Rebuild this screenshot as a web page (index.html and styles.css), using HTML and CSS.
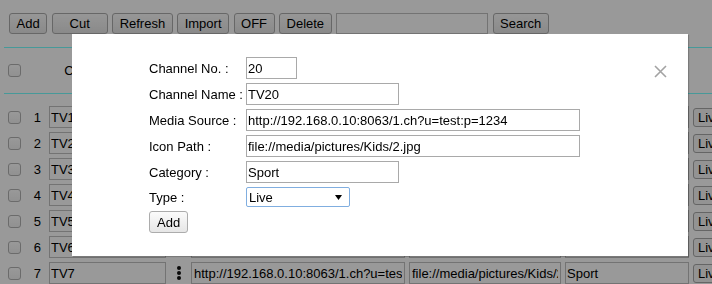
FILE: index.html
```html
<!DOCTYPE html>
<html lang="en">
<head>
  <meta charset="UTF-8">
  <title>Channel List</title>
  <link rel="stylesheet" href="styles.css">
</head>
<body>
  <div class="toolbar">
    <button>Add</button>
    <button class="btn-cut">Cut</button>
    <button>Refresh</button>
    <button>Import</button>
    <button>OFF</button>
    <button>Delete</button>
    <input type="text" class="search-box">
    <button>Search</button>
  </div>

  <div class="channel-table">
    <div class="channel-row table-head">
      <input type="checkbox" class="check">
      <span></span>
      <span class="head-cell">Channel Name</span>
      <span></span>
      <span class="head-cell">Media Source</span>
      <span class="head-cell">Icon Path</span>
      <span class="head-cell">Category</span>
      <span class="head-cell">Type</span>
    </div>

    <div class="table-body">
      <div class="channel-row">
        <input type="checkbox" class="check">
        <span class="num">1</span>
        <input type="text" class="cell" value="TV1">
        <span class="more"><svg width="4" height="14" viewBox="0 0 4 14"><circle cx="2" cy="2" r="2"/><circle cx="2" cy="7" r="2"/><circle cx="2" cy="12" r="2"/></svg></span>
        <input type="text" class="cell" value="http://192.168.0.10:8063/1.ch?u=test:p=1234">
        <input type="text" class="cell" value="file://media/pictures/Kids/2.jpg">
        <input type="text" class="cell" value="Sport">
        <select class="type-select"><option>Live</option></select>
      </div>
      <div class="channel-row">
        <input type="checkbox" class="check">
        <span class="num">2</span>
        <input type="text" class="cell" value="TV2">
        <span class="more"><svg width="4" height="14" viewBox="0 0 4 14"><circle cx="2" cy="2" r="2"/><circle cx="2" cy="7" r="2"/><circle cx="2" cy="12" r="2"/></svg></span>
        <input type="text" class="cell" value="http://192.168.0.10:8063/1.ch?u=test:p=1234">
        <input type="text" class="cell" value="file://media/pictures/Kids/2.jpg">
        <input type="text" class="cell" value="Sport">
        <select class="type-select"><option>Live</option></select>
      </div>
      <div class="channel-row">
        <input type="checkbox" class="check">
        <span class="num">3</span>
        <input type="text" class="cell" value="TV3">
        <span class="more"><svg width="4" height="14" viewBox="0 0 4 14"><circle cx="2" cy="2" r="2"/><circle cx="2" cy="7" r="2"/><circle cx="2" cy="12" r="2"/></svg></span>
        <input type="text" class="cell" value="http://192.168.0.10:8063/1.ch?u=test:p=1234">
        <input type="text" class="cell" value="file://media/pictures/Kids/2.jpg">
        <input type="text" class="cell" value="Sport">
        <select class="type-select"><option>Live</option></select>
      </div>
      <div class="channel-row">
        <input type="checkbox" class="check">
        <span class="num">4</span>
        <input type="text" class="cell" value="TV4">
        <span class="more"><svg width="4" height="14" viewBox="0 0 4 14"><circle cx="2" cy="2" r="2"/><circle cx="2" cy="7" r="2"/><circle cx="2" cy="12" r="2"/></svg></span>
        <input type="text" class="cell" value="http://192.168.0.10:8063/1.ch?u=test:p=1234">
        <input type="text" class="cell" value="file://media/pictures/Kids/2.jpg">
        <input type="text" class="cell" value="Sport">
        <select class="type-select"><option>Live</option></select>
      </div>
      <div class="channel-row">
        <input type="checkbox" class="check">
        <span class="num">5</span>
        <input type="text" class="cell" value="TV5">
        <span class="more"><svg width="4" height="14" viewBox="0 0 4 14"><circle cx="2" cy="2" r="2"/><circle cx="2" cy="7" r="2"/><circle cx="2" cy="12" r="2"/></svg></span>
        <input type="text" class="cell" value="http://192.168.0.10:8063/1.ch?u=test:p=1234">
        <input type="text" class="cell" value="file://media/pictures/Kids/2.jpg">
        <input type="text" class="cell" value="Sport">
        <select class="type-select"><option>Live</option></select>
      </div>
      <div class="channel-row">
        <input type="checkbox" class="check">
        <span class="num">6</span>
        <input type="text" class="cell" value="TV6">
        <span class="more"><svg width="4" height="14" viewBox="0 0 4 14"><circle cx="2" cy="2" r="2"/><circle cx="2" cy="7" r="2"/><circle cx="2" cy="12" r="2"/></svg></span>
        <input type="text" class="cell" value="http://192.168.0.10:8063/1.ch?u=test:p=1234">
        <input type="text" class="cell" value="file://media/pictures/Kids/2.jpg">
        <input type="text" class="cell" value="Sport">
        <select class="type-select"><option>Live</option></select>
      </div>
      <div class="channel-row">
        <input type="checkbox" class="check">
        <span class="num">7</span>
        <input type="text" class="cell" value="TV7">
        <span class="more"><svg width="4" height="14" viewBox="0 0 4 14"><circle cx="2" cy="2" r="2"/><circle cx="2" cy="7" r="2"/><circle cx="2" cy="12" r="2"/></svg></span>
        <input type="text" class="cell" value="http://192.168.0.10:8063/1.ch?u=test:p=1234">
        <input type="text" class="cell" value="file://media/pictures/Kids/2.jpg">
        <input type="text" class="cell" value="Sport">
        <select class="type-select"><option>Live</option></select>
      </div>
      <div class="channel-row">
        <input type="checkbox" class="check">
        <span class="num">8</span>
        <input type="text" class="cell" value="TV8">
        <span class="more"><svg width="4" height="14" viewBox="0 0 4 14"><circle cx="2" cy="2" r="2"/><circle cx="2" cy="7" r="2"/><circle cx="2" cy="12" r="2"/></svg></span>
        <input type="text" class="cell" value="http://192.168.0.10:8063/1.ch?u=test:p=1234">
        <input type="text" class="cell" value="file://media/pictures/Kids/2.jpg">
        <input type="text" class="cell" value="Sport">
        <select class="type-select"><option>Live</option></select>
      </div>
    </div>
  </div>

  <div class="overlay"></div>

  <form class="modal" id="addChannel">
    <span class="close">
      <svg width="13" height="13" viewBox="0 0 13 13"><path d="M1 1L12 12M12 1L1 12" stroke="#a3a3a3" stroke-width="1.6" fill="none"/></svg>
    </span>
    <div class="form-grid">
      <label for="chNo">Channel No. :</label>
      <input type="text" id="chNo" class="field w-sm" value="20">

      <label for="chName">Channel Name :</label>
      <input type="text" id="chName" class="field w-md" value="TV20">

      <label for="chSource">Media Source :</label>
      <input type="text" id="chSource" class="field w-lg" value="http://192.168.0.10:8063/1.ch?u=test:p=1234">

      <label for="chIcon">Icon Path :</label>
      <input type="text" id="chIcon" class="field w-lg" value="file://media/pictures/Kids/2.jpg">

      <label for="chCategory">Category :</label>
      <input type="text" id="chCategory" class="field w-md" value="Sport">

      <label for="chType">Type :</label>
      <select id="chType" class="field-select"><option>Live</option></select>

      <button type="submit" class="btn-add">Add</button>
    </div>
  </form>
</body>
</html>
```

FILE: styles.css
```css
/* Reset */
html, body {
  overflow: hidden;
}
body {
  margin: 0;
  padding: 13px 0 0 4px;
  font-family: "Liberation Sans", Arial, sans-serif;
  font-size: 13px;
  color: #000;
  background-color: #fff;
}
button, input, select {
  font-family: inherit;
  font-size: 13px;
  color: #000;
  margin: 0;
  box-sizing: border-box;
}
button {
  height: 21px;
  padding: 0 6.5px;
  background: linear-gradient(#fbfbfb, #e6e6e6);
  border: 1px solid #acacac;
  border-radius: 3px;
  cursor: pointer;
}

/* Toolbar */
.toolbar {
  display: flex;
  gap: 4.5px;
  padding-left: 5px;
}
.btn-cut {
  width: 56px;
}
.search-box {
  width: 152px;
  height: 21px;
  border: 1px solid #c0c0c0;
  background: #fff;
}

/* Channel table */
.channel-table {
  margin-top: 13px;
}
.channel-row {
  display: grid;
  grid-template-columns: 13px 20px 117px 17px 214px 152px 124px 80px;
  column-gap: 4px;
  align-items: center;
  padding-left: 4px;
  height: 26px;
}
.table-head {
  height: 45px;
  border-top: 1px solid #7ff;
  border-bottom: 1px solid #7ff;
}
.head-cell {
  text-align: center;
  white-space: nowrap;
}
.table-body {
  padding-top: 10px;
}
.check {
  appearance: none;
  width: 13px;
  height: 13px;
  margin: 0;
  border: 1px solid #b3b3b3;
  border-radius: 3px;
  background: linear-gradient(#fff, #f2f2f2);
}
.num {
  text-align: right;
  padding-right: 4px;
}
.cell {
  height: 22px;
  padding: 0 1px;
  border: 1px solid #c0c0c0;
  background: #fff;
  width: 100%;
}
.cell[value^="http"], .cell[value^="file"] {
  padding: 0 2px;
}
.more {
  display: flex;
  justify-content: center;
}
.more svg {
  fill: #111;
}
.type-select {
  appearance: none;
  height: 19px;
  padding: 0 4px;
  border: 1px solid #a8a8a8;
  border-radius: 3px;
  background: #f6f6f6;
}

/* Modal */
.overlay {
  position: fixed;
  inset: 0;
  background-color: rgba(0, 0, 0, 0.4);
}
.modal {
  position: fixed;
  left: 72px;
  top: 34px;
  width: 616px;
  height: 222px;
  margin: 0;
  padding: 23px 0 0 77px;
  box-sizing: border-box;
  background-color: #fff;
  box-shadow: 1px 1px 1px rgba(0, 0, 0, 0.2);
}
.close {
  position: absolute;
  top: 31px;
  right: 21px;
  width: 13px;
  height: 13px;
  cursor: pointer;
}
.close svg {
  display: block;
}
.form-grid {
  display: grid;
  grid-template-columns: 97px auto;
  row-gap: 4px;
  align-items: center;
  justify-items: start;
}
.field {
  height: 22px;
  padding: 0 1px;
  border: 1px solid #a9a9a9;
  background: #fff;
}
.w-sm {
  width: 51px;
}
.w-md {
  width: 153px;
}
.w-lg {
  width: 334px;
}
.field-select {
  appearance: none;
  width: 104px;
  height: 20px;
  padding: 0 2px;
  border: 1px solid #80aee0;
  border-radius: 2px;
  background: #fff url("data:image/svg+xml,%3Csvg xmlns='http://www.w3.org/2000/svg' width='7' height='5'%3E%3Cpath d='M0 0h7L3.5 5z' fill='%23000'/%3E%3C/svg%3E") no-repeat right 7px center;
}
.btn-add {
  grid-column: 1 / span 2;
  height: 22px;
  padding: 0 7px;
}
```
